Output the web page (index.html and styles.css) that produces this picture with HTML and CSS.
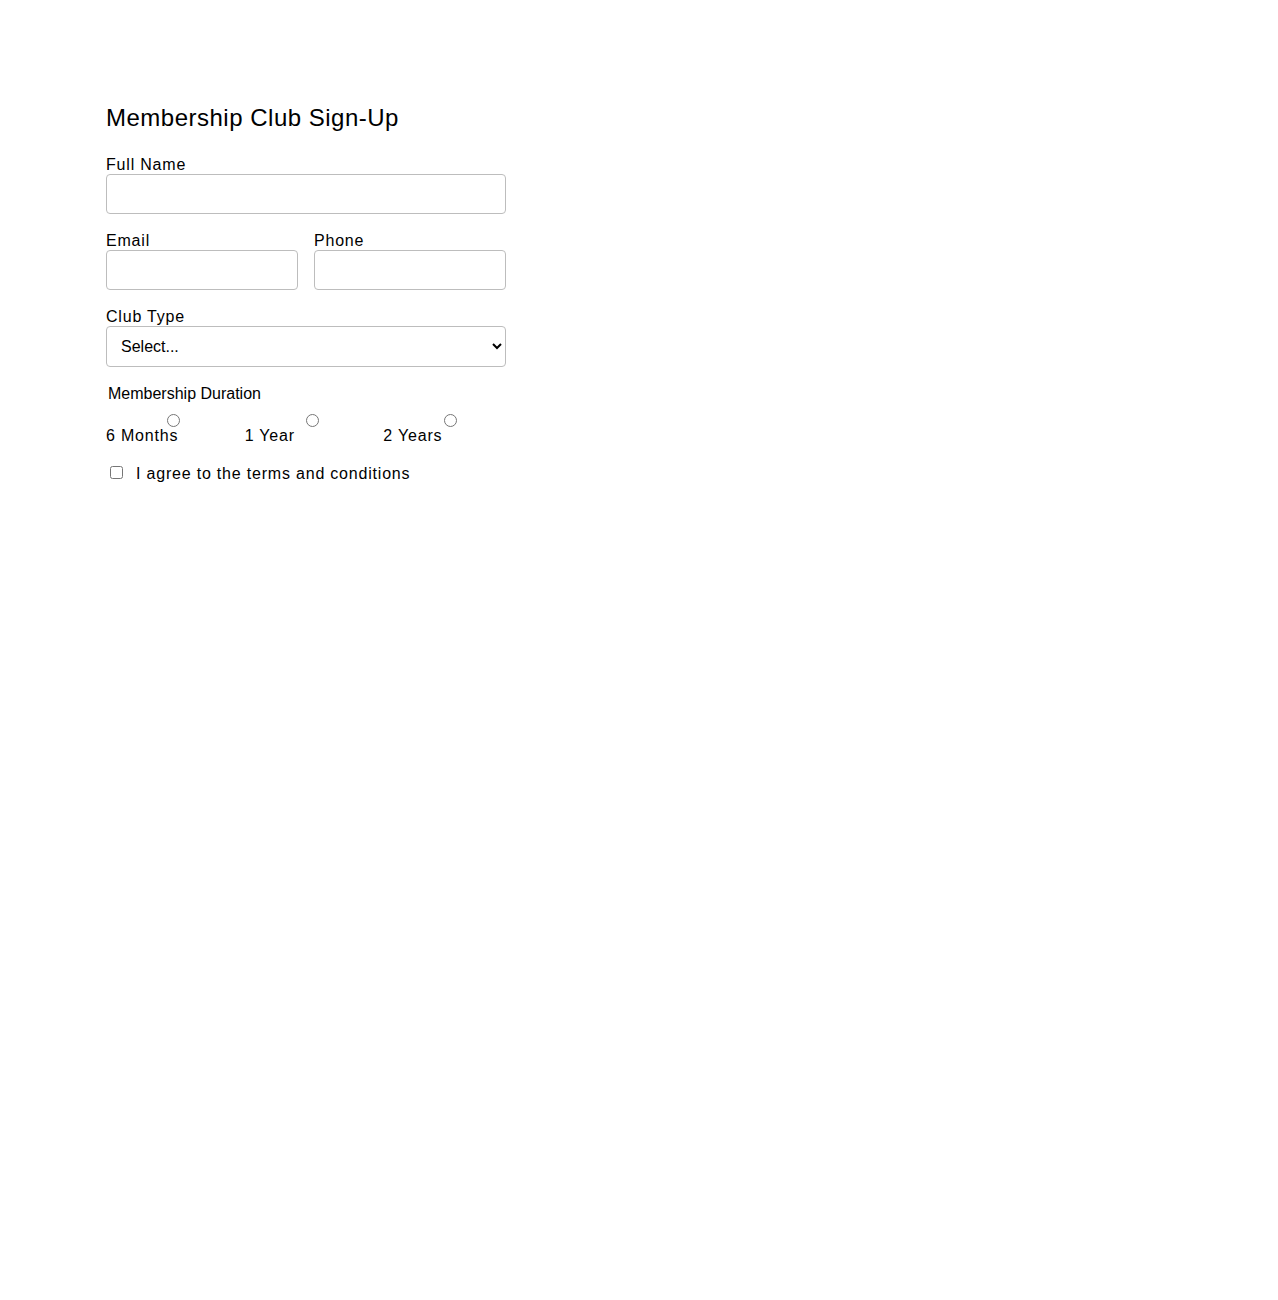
FILE: index.html
```html
<!DOCTYPE html>
<html lang="en">
<head>
<meta charset="utf-8">
<title>Membership Club Sign-Up</title>
<link rel="stylesheet" href="styles.css">
</head>
<body>
<div class="container">
  <h2 class="title">Membership Club Sign-Up</h2>
  <form class="form">
    <div class="field">
      <label class="label" for="name">Full Name</label>
      <input class="input" id="name" type="text">
    </div>
    <div class="row">
      <div class="field">
        <label class="label" for="email">Email</label>
        <input class="input" id="email" type="email">
      </div>
      <div class="field">
        <label class="label" for="phone">Phone</label>
        <input class="input" id="phone" type="tel">
      </div>
    </div>
    <div class="field">
      <label class="label" for="club">Club Type</label>
      <select class="select" id="club">
        <option>Select...</option>
        <option>Fitness</option>
        <option>Book Club</option>
        <option>Golf</option>
      </select>
    </div>
    <fieldset class="duration">
      <legend class="legend">Membership Duration</legend>
      <div class="options">
        <label class="option"><span class="option-text">6 Months</span><input class="radio" type="radio" name="dur"></label>
        <label class="option"><span class="option-text">1 Year</span><input class="radio" type="radio" name="dur"></label>
        <label class="option"><span class="option-text">2 Years</span><input class="radio" type="radio" name="dur"></label>
      </div>
    </fieldset>
    <label class="agree"><input class="checkbox" type="checkbox"><span>I agree to the terms and conditions</span></label>
  </form>
</div>
</body>
</html>
```
FILE: styles.css
```css
html, body {
  margin: 0;
  padding: 0;
  background: #fff;
}
body {
  font-family: "Liberation Sans", Arial, sans-serif;
  font-size: 16px;
  color: #000;
  letter-spacing: 0.8px;
}
.container {
  width: 400px;
  padding: 104px 0 0 106px;
}
.title {
  margin: 0 0 22px;
  font-size: 24px;
  font-weight: normal;
  line-height: 28px;
  letter-spacing: 0.5px;
}
.form {
  margin: 0;
}
.field {
  margin-bottom: 16px;
}
.row {
  display: grid;
  grid-template-columns: 1fr 1fr;
  column-gap: 16px;
}
.label {
  display: block;
  padding-top: 1px;
  line-height: 19px;
}
.input, .select {
  display: block;
  box-sizing: border-box;
  width: 100%;
  height: 40px;
  margin: 0;
  padding: 10px;
  border: 1px solid #bdbdbd;
  border-radius: 4px;
  background: #fff;
  font-family: "Liberation Sans", Arial, sans-serif;
  font-size: 16px;
  letter-spacing: normal;
  color: #000;
}
.select {
  height: 41px;
  padding: 0 10px;
}
.duration {
  margin: 0;
  padding: 0;
  border: 0;
  min-width: 0;
}
.legend {
  padding: 1px 2px 0;
  line-height: 20px;
  letter-spacing: normal;
}
.options {
  display: grid;
  grid-template-columns: repeat(3, 1fr);
  column-gap: 16px;
  margin-top: 9px;
}
.option {
  display: flex;
  align-items: flex-start;
}
.option-text {
  width: 61px;
  white-space: nowrap;
  padding-top: 13px;
  line-height: 20px;
}
.radio {
  width: 13px;
  height: 13px;
  margin: 1px 0 0;
}
.agree {
  display: flex;
  align-items: center;
  margin-top: 18px;
  line-height: 20px;
}
.checkbox {
  width: 13px;
  height: 13px;
  margin: 0 13px 4px 4px;
}
```
